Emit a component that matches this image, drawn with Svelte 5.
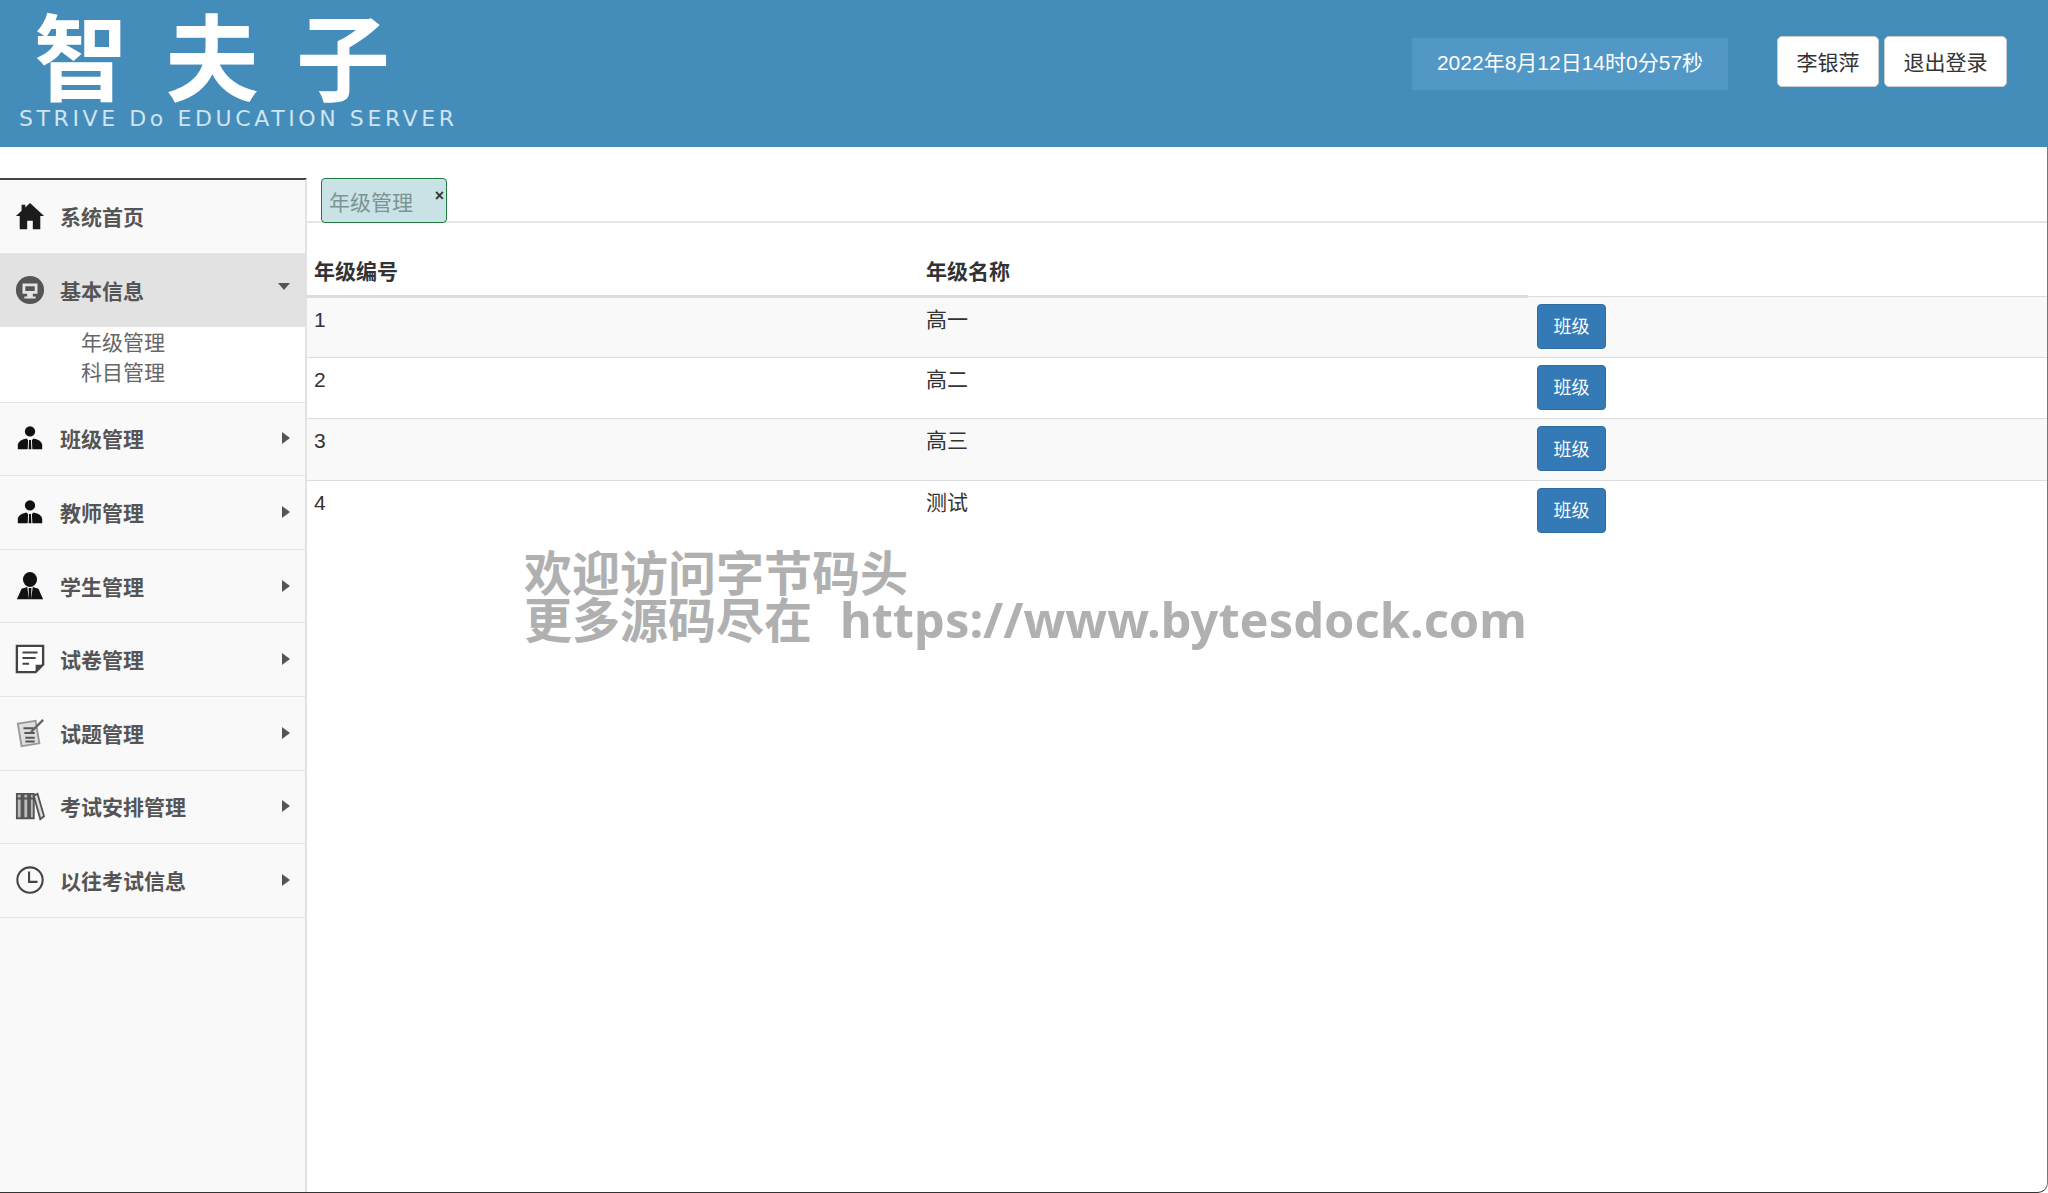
<script>
    const menus = [
        { name: '班级管理', icon: 'man' },
        { name: '教师管理', icon: 'man' },
        { name: '学生管理', icon: 'student' },
        { name: '试卷管理', icon: 'paper' },
        { name: '试题管理', icon: 'question' },
        { name: '考试安排管理', icon: 'books' },
        { name: '以往考试信息', icon: 'clock' }
    ];
    const grades = [
        { id: 1, name: '高一' },
        { id: 2, name: '高二' },
        { id: 3, name: '高三' },
        { id: 4, name: '测试' }
    ];
</script>

{#snippet icon(kind)}
    <svg class="icon" viewBox="0 0 32 32">
        {#if kind === 'home'}
            <path d="M16 2 L31 16 L27 16 L27 30 L19 30 L19 21 L13 21 L13 30 L5 30 L5 16 L1 16 L7 10.5 L7 4 L11 4 L11 7 Z" fill="#1c1c1c" />
        {:else if kind === 'info'}
            <circle cx="16" cy="16" r="15" fill="#555" />
            <path d="M8 9 H24 V20 H19 V23 H22 V25 H10 V23 H13 V20 H8 Z M11 12 V17 H21 V12 Z" fill="#e4e4e4" />
        {:else if kind === 'man'}
            <circle cx="16" cy="9" r="5.5" fill="#111" />
            <path d="M3 28 V23 Q4 18 12 16.5 L14 18 L13.5 28 Z M29 28 V23 Q28 18 20 16.5 L18 18 L18.5 28 Z M15 18 H17 L17.5 28 H14.5 Z" fill="#111" />
        {:else if kind === 'student'}
            <ellipse cx="16" cy="9" rx="7.5" ry="8" fill="#111" />
            <path d="M2 30 L7 19 L13 17 L15 30 Z M30 30 L25 19 L19 17 L17 30 Z M14.5 18 H17.5 L17 30 H15 Z" fill="#111" />
        {:else if kind === 'paper'}
            <path d="M2 2 H30 V22 L22 30 H2 Z" fill="#fff" stroke="#444" stroke-width="2.5" />
            <path d="M8 9 H24 M8 15 H22 M8 21 H15" stroke="#444" stroke-width="2.2" />
            <path d="M22 30 V22 H30 Z" fill="#444" />
        {:else if kind === 'question'}
            <path d="M3 6 L22 3 L26 27 L7 30 Z" fill="#dedede" stroke="#999" stroke-width="2" />
            <path d="M9 11 H20 M10 16 H21 M11 21 H21 M11 25 H21" stroke="#555" stroke-width="2.2" />
            <path d="M17 15 L30 2" stroke="#666" stroke-width="2.5" />
        {:else if kind === 'books'}
            <path d="M2 3 H7 V29 H2 Z M9 3 H14 V29 H9 Z M16 3 H20 V29 H16 Z" fill="#bbb" stroke="#555" stroke-width="2" />
            <path d="M20 5 L24 3 L31 27 L27 30 Z" fill="#ddd" stroke="#555" stroke-width="2" />
            <path d="M2 8 H7 M9 8 H14 M16 8 H20" stroke="#555" stroke-width="2" />
        {:else if kind === 'clock'}
            <circle cx="16" cy="16" r="13.5" fill="none" stroke="#444" stroke-width="2.2" />
            <path d="M15 7 V18 H24" fill="none" stroke="#444" stroke-width="2.2" />
        {/if}
    </svg>
{/snippet}

<div class="page">
    <header>
        <div class="logo">
            <div class="logo-title"><span>智</span><span>夫</span><span>子</span></div>
            <div class="logo-sub">STRIVE Do EDUCATION SERVER</div>
        </div>
        <div class="clock">2022年8月12日14时0分57秒</div>
        <button class="head-btn user">李银萍</button>
        <button class="head-btn logout">退出登录</button>
    </header>

    <div class="body">
        <aside>
            <div class="menu">{@render icon('home')}<span>系统首页</span></div>
            <div class="menu open">{@render icon('info')}<span>基本信息</span><i class="caret down"></i></div>
            <div class="submenu">
                <div>年级管理</div>
                <div>科目管理</div>
            </div>
            {#each menus as m}
                <div class="menu">{@render icon(m.icon)}<span>{m.name}</span><i class="caret"></i></div>
            {/each}
        </aside>

        <main>
            <div class="tabs">
                <div class="tab">年级管理<b>×</b></div>
            </div>
            <table>
                <thead>
                    <tr><th class="c1">年级编号</th><th class="c2">年级名称</th><th class="c3"></th></tr>
                </thead>
                <tbody>
                    {#each grades as g}
                        <tr>
                            <td>{g.id}</td>
                            <td>{g.name}</td>
                            <td class="action"><button class="class-btn">班级</button></td>
                        </tr>
                    {/each}
                </tbody>
            </table>
            <div class="watermark">欢迎访问字节码头<br />更多源码尽在&nbsp;&nbsp;<span>https://www.bytesdock.com</span></div>
        </main>
    </div>
</div>

<style>
    :global(body) {
        background: #fff;
    }
    .page {
        height: 1193px;
        display: flex;
        flex-direction: column;
        font-family: "Liberation Sans", "Noto Sans CJK SC", sans-serif;
        font-size: 21px;
        color: #333;
        overflow: hidden;
    }

    header {
        height: 147px;
        flex: none;
        background: #448cba;
        display: flex;
        align-items: flex-start;
    }
    .logo {
        margin-left: 19px;
        margin-right: auto;
        color: #fff;
    }
    .logo-title {
        display: flex;
        gap: 37px;
        margin-left: 15px;
        font-family: "Noto Sans CJK SC", sans-serif;
        font-size: 94px;
        font-weight: 700;
        line-height: 106px;
    }
    .logo-sub {
        font-family: "DejaVu Sans", sans-serif;
        font-size: 22px;
        font-weight: 400;
        line-height: 26px;
        letter-spacing: 3.6px;
        color: #cfe4f0;
        white-space: nowrap;
    }
    .clock {
        margin-top: 38px;
        margin-right: 49px;
        width: 316px;
        height: 52px;
        line-height: 50px;
        text-align: center;
        font-size: 21px;
        color: #fff;
        background: #5298c6;
    }
    .head-btn {
        margin-top: 36px;
        height: 51px;
        background: #fff;
        border: 1px solid #ccc;
        border-radius: 5px;
        font: inherit;
        color: #333;
        padding: 0 0 2px;
    }
    .user {
        width: 102px;
    }
    .logout {
        width: 123px;
        margin-left: 5px;
        margin-right: 41px;
    }

    .body {
        flex: 1;
        display: flex;
        padding-top: 31px;
        min-height: 0;
        border-right: 1px solid #777;
        border-bottom: 1px solid #333;
        border-bottom-right-radius: 10px;
        overflow: hidden;
    }
    aside {
        width: 305px;
        flex: none;
        background: #f9f9f9;
        border-top: 2px solid #444;
        border-right: 2px solid #e2e2e2;
    }
    .menu {
        height: 73.6px;
        box-sizing: border-box;
        display: flex;
        align-items: center;
        padding: 0 15px 1px;
        gap: 15px;
        border-bottom: 1px solid #e5e5e5;
        font-weight: 700;
        color: #555;
    }
    .menu.open {
        background: #e2e2e2;
        border-bottom: none;
    }
    .icon {
        width: 30px;
        height: 30px;
        flex: none;
    }
    .caret {
        margin-left: auto;
        width: 0;
        height: 0;
        border-top: 6px solid transparent;
        border-bottom: 6px solid transparent;
        border-left: 8px solid #555;
    }
    .caret.down {
        margin-top: -6px;
        border-left: 6px solid transparent;
        border-right: 6px solid transparent;
        border-top: 7px solid #555;
        border-bottom: none;
    }
    .submenu {
        background: #fff;
        height: 75.5px;
        box-sizing: border-box;
        padding-left: 81px;
        padding-top: 1px;
        line-height: 30px;
        color: #666;
        border-bottom: 1px solid #e5e5e5;
    }

    main {
        position: relative;
        flex: 1;
        min-width: 0;
    }
    .tabs {
        height: 43px;
        padding-left: 14px;
        border-bottom: 2px solid #e5e5e5;
    }
    .tab {
        position: relative;
        box-sizing: border-box;
        width: 126px;
        height: 45px;
        padding-left: 7px;
        line-height: 48px;
        background: #c8e2e6;
        border: 1px solid #1f7a3e;
        border-radius: 4px;
        color: #7c9393;
    }
    .tab b {
        position: absolute;
        right: 2px;
        top: -7px;
        font-size: 16px;
        font-weight: 700;
        color: #333;
    }
    table {
        width: 100%;
        margin-top: 17px;
        border-collapse: collapse;
        table-layout: fixed;
    }
    th {
        height: 56px;
        padding: 6px 7px 0;
        text-align: left;
        font-weight: 700;
        box-sizing: border-box;
    }
    .c1 {
        width: 612px;
        border-bottom: 3px solid #ddd;
    }
    .c2 {
        width: 609px;
        border-bottom: 3px solid #ddd;
    }
    .c3 {
        border-bottom: 1px solid #ddd;
    }
    td {
        height: 61.4px;
        box-sizing: border-box;
        padding: 7px 7px 0;
        line-height: 30px;
        vertical-align: top;
        border-bottom: 1px solid #ddd;
    }
    td.action {
        padding: 7px 9px 0;
    }
    tbody tr:nth-child(odd) {
        background: #f9f9f9;
    }
    tbody tr:last-child td {
        border-bottom: none;
    }
    .class-btn {
        display: block;
        width: 69px;
        height: 45px;
        padding: 0 0 2px;
        border: 1px solid #2e6da4;
        border-radius: 4px;
        background: #337ab7;
        color: #fff;
        font-family: "Noto Sans CJK SC", sans-serif;
        font-size: 18px;
    }
    .watermark {
        position: absolute;
        left: 217px;
        top: 371px;
        font-family: "Noto Sans", "Noto Sans CJK SC", sans-serif;
        font-size: 48px;
        font-weight: 700;
        line-height: 47px;
        color: #b0b0b0;
        white-space: nowrap;
    }
    .watermark span {
        font-size: 48.8px;
        margin-left: 3px;
    }
</style>
